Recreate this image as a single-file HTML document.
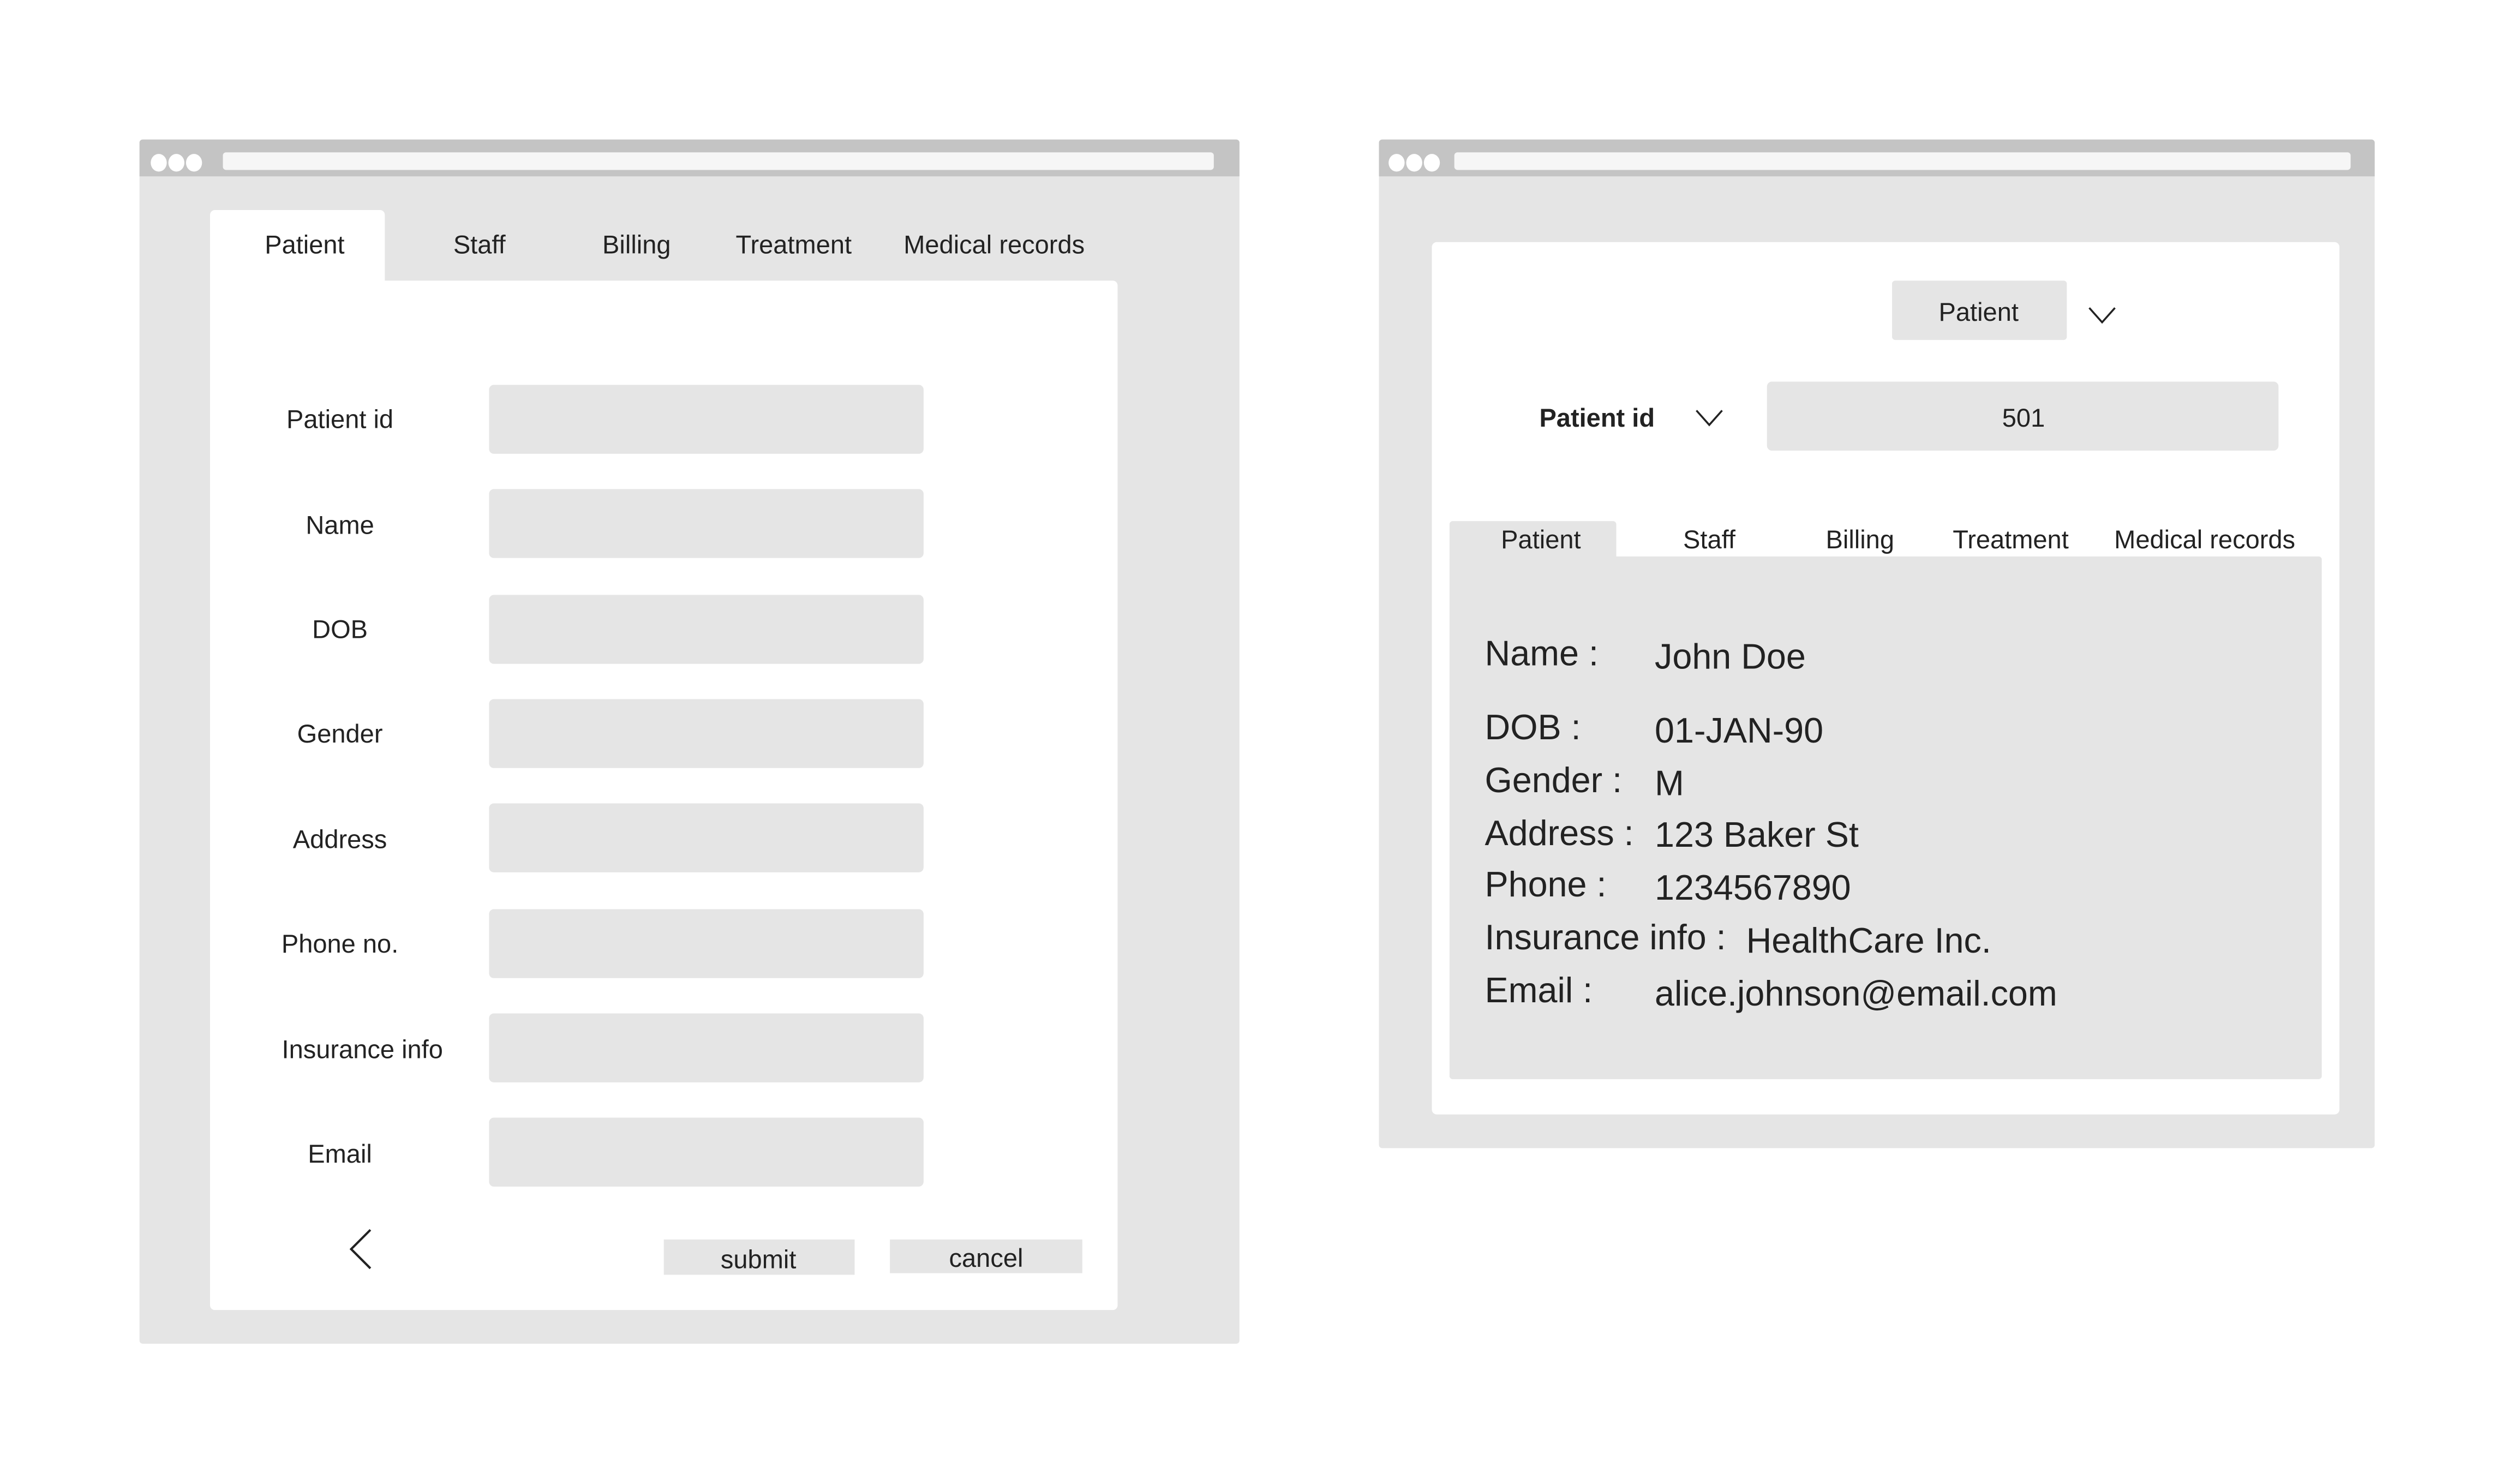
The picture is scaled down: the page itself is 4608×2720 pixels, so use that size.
<!DOCTYPE html>
<html><head><meta charset="utf-8"><style>
html,body{margin:0;padding:0;background:#fff;overflow:hidden}
body{width:4608px;height:2720px;position:relative}
#s{position:absolute;left:0;top:0;width:1570px;height:930px;transform:scale(2.939);transform-origin:0 0;font-family:"Liberation Sans",sans-serif;color:#222}
#s div{position:absolute;box-sizing:border-box}
.g{background:#e5e5e5}
.t{white-space:nowrap;line-height:20px;height:20px;font-size:16px;margin-top:2px}
.c{transform:translateX(-50%)}
.d{font-size:22px;line-height:26px;height:26px;white-space:nowrap;margin-top:1px}
.tb{background:#c4c4c4}
.ab{background:#f6f6f6;border-radius:2px}
.dot{width:10px;height:11px;border-radius:50%;background:#fff}
</style></head><body><div id="s">

<div class="g" style="left:87px;top:87px;width:686px;height:751px;border-radius:2px"></div>
<div class="tb" style="left:87px;top:87px;width:686px;height:23px;border-radius:2px 2px 0 0"></div>
<div class="dot" style="left:94px;top:96px"></div>
<div class="dot" style="left:105px;top:96px"></div>
<div class="dot" style="left:116px;top:96px"></div>
<div class="ab" style="left:139px;top:95px;width:618px;height:11px"></div>

<div style="left:131px;top:131px;width:109px;height:50px;background:#fff;border-radius:3px 3px 0 0"></div>
<div style="left:131px;top:175px;width:566px;height:642px;background:#fff;border-radius:3px"></div>
<div class="t c" style="left:190px;top:142px">Patient</div>
<div class="t c" style="left:299px;top:142px">Staff</div>
<div class="t c" style="left:397px;top:142px">Billing</div>
<div class="t c" style="left:495px;top:142px">Treatment</div>
<div class="t c" style="left:620px;top:142px">Medical records</div>

<div class="t c" style="left:212px;top:251px">Patient id</div>
<div class="t c" style="left:212px;top:317px">Name</div>
<div class="t c" style="left:212px;top:382px">DOB</div>
<div class="t c" style="left:212px;top:447px">Gender</div>
<div class="t c" style="left:212px;top:513px">Address</div>
<div class="t c" style="left:212px;top:578px">Phone no.</div>
<div class="t c" style="left:226px;top:644px">Insurance info</div>
<div class="t c" style="left:212px;top:709px">Email</div>

<div class="g" style="left:305px;top:240px;width:271px;height:43px;border-radius:3px"></div>
<div class="g" style="left:305px;top:305px;width:271px;height:43px;border-radius:3px"></div>
<div class="g" style="left:305px;top:371px;width:271px;height:43px;border-radius:3px"></div>
<div class="g" style="left:305px;top:436px;width:271px;height:43px;border-radius:3px"></div>
<div class="g" style="left:305px;top:501px;width:271px;height:43px;border-radius:3px"></div>
<div class="g" style="left:305px;top:567px;width:271px;height:43px;border-radius:3px"></div>
<div class="g" style="left:305px;top:632px;width:271px;height:43px;border-radius:3px"></div>
<div class="g" style="left:305px;top:697px;width:271px;height:43px;border-radius:3px"></div>

<svg style="position:absolute;left:215px;top:765px" width="20" height="28" viewBox="0 0 20 28"><path d="M16 2 L4 14 L16 26" fill="none" stroke="#222" stroke-width="1.4"/></svg>

<div class="g" style="left:414px;top:773px;width:119px;height:22px"></div>
<div class="g" style="left:555px;top:773px;width:120px;height:21px"></div>
<div class="t c" style="left:473px;top:775px">submit</div>
<div class="t c" style="left:615px;top:774px">cancel</div>

<div class="g" style="left:860px;top:87px;width:621px;height:629px;border-radius:2px"></div>
<div class="tb" style="left:860px;top:87px;width:621px;height:23px;border-radius:2px 2px 0 0"></div>
<div class="dot" style="left:866px;top:96px"></div>
<div class="dot" style="left:877px;top:96px"></div>
<div class="dot" style="left:888px;top:96px"></div>
<div class="ab" style="left:907px;top:95px;width:559px;height:11px"></div>

<div style="left:893px;top:151px;width:566px;height:544px;background:#fff;border-radius:3px"></div>
<div class="g" style="left:1180px;top:175px;width:109px;height:37px;border-radius:2px"></div>
<div class="t c" style="left:1234px;top:184px">Patient</div>
<svg style="position:absolute;left:1302px;top:191px" width="18" height="12" viewBox="0 0 18 12"><path d="M1 1 L9 10 L17 1" fill="none" stroke="#222" stroke-width="1.2"/></svg>

<div class="t" style="left:960px;top:250px;font-weight:bold">Patient id</div>
<svg style="position:absolute;left:1057px;top:255px" width="18" height="12" viewBox="0 0 18 12"><path d="M1 1 L9 10 L17 1" fill="none" stroke="#222" stroke-width="1.2"/></svg>
<div class="g" style="left:1102px;top:238px;width:319px;height:43px;border-radius:3px"></div>
<div class="t c" style="left:1262px;top:250px">501</div>

<div class="g" style="left:904px;top:325px;width:104px;height:24px;border-radius:2px 2px 0 0"></div>
<div class="g" style="left:904px;top:347px;width:544px;height:326px;border-radius:2px"></div>
<div class="t c" style="left:961px;top:326px">Patient</div>
<div class="t c" style="left:1066px;top:326px">Staff</div>
<div class="t c" style="left:1160px;top:326px">Billing</div>
<div class="t c" style="left:1254px;top:326px">Treatment</div>
<div class="t c" style="left:1375px;top:326px">Medical records</div>

<div class="d" style="left:926px;top:394px">Name :</div>
<div class="d" style="left:1032px;top:396px">John Doe</div>
<div class="d" style="left:926px;top:440px">DOB :</div>
<div class="d" style="left:1032px;top:442px">01-JAN-90</div>
<div class="d" style="left:926px;top:473px">Gender :</div>
<div class="d" style="left:1032px;top:475px">M</div>
<div class="d" style="left:926px;top:506px">Address :</div>
<div class="d" style="left:1032px;top:507px">123 Baker St</div>
<div class="d" style="left:926px;top:538px">Phone :</div>
<div class="d" style="left:1032px;top:540px">1234567890</div>
<div class="d" style="left:926px;top:571px">Insurance info :</div>
<div class="d" style="left:1089px;top:573px">HealthCare Inc.</div>
<div class="d" style="left:926px;top:604px">Email :</div>
<div class="d" style="left:1032px;top:606px">alice.johnson@email.com</div>

</div></body></html>
